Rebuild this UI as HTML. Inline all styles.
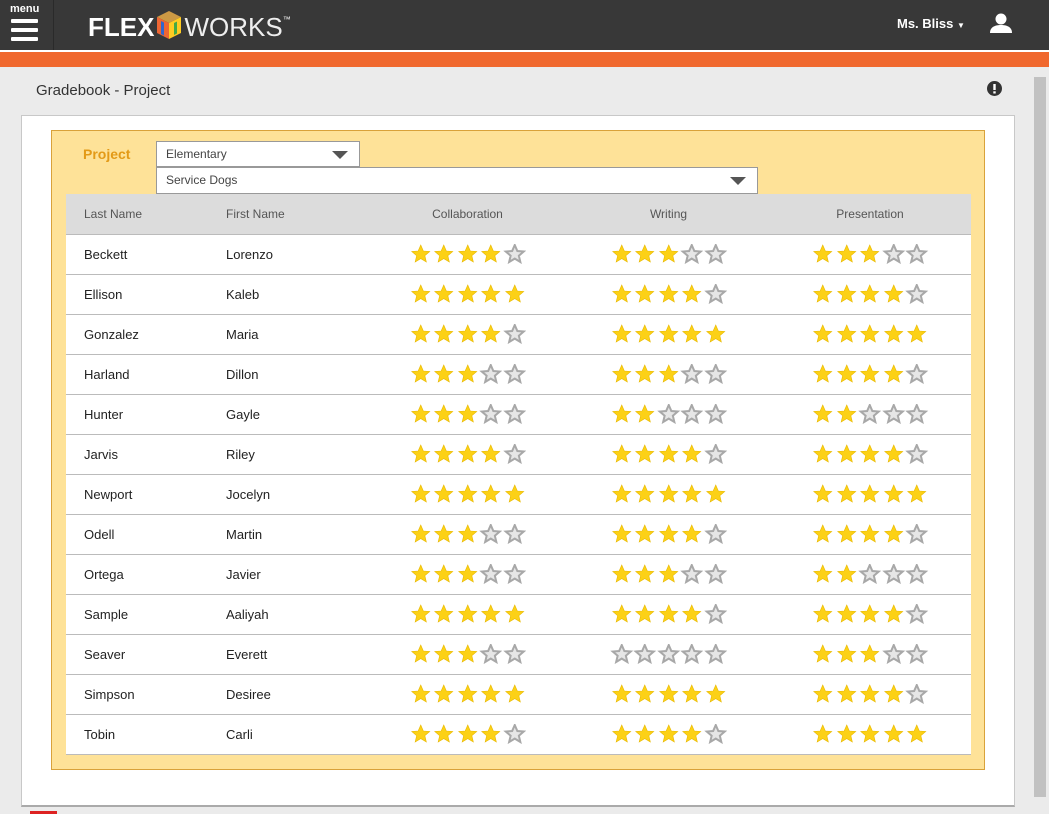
<!DOCTYPE html>
<html><head><meta charset="utf-8"><style>
*{box-sizing:border-box;margin:0;padding:0}
html,body{width:1049px;height:814px;overflow:hidden}
body{background:#ebebeb;font-family:"Liberation Sans",sans-serif;position:relative}
.hdr{position:absolute;left:0;top:0;width:1049px;height:50px;background:#383838}
.menu{position:absolute;left:0;top:0;width:54px;height:50px;border-right:1px solid #2a2a2a}
.menu .t{position:absolute;left:10px;top:3px;color:#fff;font-size:11px;font-weight:bold}
.menu i{position:absolute;left:11px;width:27px;height:4px;background:#fff;border-radius:1px}
.logo{position:absolute;left:88px;top:9px;color:#fff;font-size:26px}
.sep{position:absolute;top:50px;left:0;width:1049px;height:2px;background:#fff}
.or{position:absolute;top:52px;left:0;width:1049px;height:15px;background:#f0682e}
.title{position:absolute;left:36px;top:82px;font-size:15px;color:#333}
.panel{position:absolute;left:21px;top:115px;width:994px;height:692px;background:#fff;border:1px solid #c8c8c8;border-bottom:2px solid #aaa}
.yb{position:absolute;left:51px;top:130px;width:934px;height:640px;background:#fee298;border:1px solid #d9a23a}
.plab{position:absolute;left:83px;top:146px;font-size:14px;font-weight:bold;color:#e39a17}
.dd{position:absolute;background:#fff;border:1px solid #999;font-size:12px;color:#444;padding:5px 9px}
.dd b{position:absolute;right:11px;top:9px;border-left:8px solid transparent;border-right:8px solid transparent;border-top:8px solid #555}
table{position:absolute;left:66px;top:194px;width:905px;border-collapse:collapse;table-layout:fixed;background:#fff;font-size:13px;color:#222}
th{height:40px;background:#dcdcdc;font-weight:normal;color:#555;font-size:12px;text-align:left}
td{height:40px;border-top:1px solid #bbb}
tr:last-child td{border-bottom:1px solid #bbb}
.c1{padding-left:18px}
.s{text-align:center}
.s svg{display:inline-block;vertical-align:middle}
.sb{position:absolute;left:1031px;top:67px;width:18px;height:747px;background:#ebebeb}
.sb i{position:absolute;left:3px;top:10px;width:12px;height:720px;background:#c1c1c1}
</style></head><body>
<div class="hdr">
 <div class="menu"><span class="t">menu</span><i style="top:19px"></i><i style="top:28px"></i><i style="top:37px"></i></div>
 <div class="logo"><b style="font-weight:900">FLEX</b><svg width="28" height="32" viewBox="0 0 28 32" style="vertical-align:-5px;margin:0 1px"><path d="M2 8l12-6 12 6-12 6z" fill="#c94"/><path d="M2 8l12 6v16L2 24z" fill="#e63"/><path d="M26 8l-12 6v16l12-6z" fill="#fc2"/><path d="M6 12l3 1.5v13L6 25z" fill="#36c"/><path d="M19 14l3-1.5v12l-3 1.5z" fill="#4a4"/></svg><span style="color:#eee;font-weight:normal">WORKS</span><sup style="font-size:8px;vertical-align:14px">™</sup></div>
 <div style="position:absolute;left:897px;top:16px;color:#fff;font-size:13px;font-weight:bold">Ms. Bliss <span style="font-size:8px">▼</span></div>
 <svg style="position:absolute;left:990px;top:13px" width="22" height="22" viewBox="0 0 22 22"><circle cx="11" cy="6" r="5.5" fill="#fff"/><path d="M0 20c0-6 5-8 11-8s11 2 11 8z" fill="#fff"/></svg>
</div>
<div class="sep"></div><div class="or"></div>
<div class="title">Gradebook - Project</div>
<svg style="position:absolute;left:987px;top:81px" width="15" height="15"><circle cx="7.5" cy="7.5" r="7.5" fill="#333"/><rect x="6.3" y="3" width="2.4" height="6" fill="#fff"/><rect x="6.3" y="10.3" width="2.4" height="2.2" fill="#fff"/></svg>
<div class="panel"></div>
<div class="yb"></div>
<div class="plab">Project</div>
<div class="dd" style="left:156px;top:141px;width:204px;height:26px">Elementary<b></b></div>
<div class="dd" style="left:156px;top:167px;width:602px;height:27px">Service Dogs<b></b></div>
<table id="t">
<colgroup><col style="width:160px"><col style="width:141px"><col style="width:201px"><col style="width:201px"><col style="width:202px"></colgroup>
<tr><th class="c1">Last Name</th><th>First Name</th><th class="s">Collaboration</th><th class="s">Writing</th><th class="s">Presentation</th></tr>
<tr><td class="c1">Beckett</td><td>Lorenzo</td><td class="s" data-n="4"></td><td class="s" data-n="3"></td><td class="s" data-n="3"></td></tr>
<tr><td class="c1">Ellison</td><td>Kaleb</td><td class="s" data-n="5"></td><td class="s" data-n="4"></td><td class="s" data-n="4"></td></tr>
<tr><td class="c1">Gonzalez</td><td>Maria</td><td class="s" data-n="4"></td><td class="s" data-n="5"></td><td class="s" data-n="5"></td></tr>
<tr><td class="c1">Harland</td><td>Dillon</td><td class="s" data-n="3"></td><td class="s" data-n="3"></td><td class="s" data-n="4"></td></tr>
<tr><td class="c1">Hunter</td><td>Gayle</td><td class="s" data-n="3"></td><td class="s" data-n="2"></td><td class="s" data-n="2"></td></tr>
<tr><td class="c1">Jarvis</td><td>Riley</td><td class="s" data-n="4"></td><td class="s" data-n="4"></td><td class="s" data-n="4"></td></tr>
<tr><td class="c1">Newport</td><td>Jocelyn</td><td class="s" data-n="5"></td><td class="s" data-n="5"></td><td class="s" data-n="5"></td></tr>
<tr><td class="c1">Odell</td><td>Martin</td><td class="s" data-n="3"></td><td class="s" data-n="4"></td><td class="s" data-n="4"></td></tr>
<tr><td class="c1">Ortega</td><td>Javier</td><td class="s" data-n="3"></td><td class="s" data-n="3"></td><td class="s" data-n="2"></td></tr>
<tr><td class="c1">Sample</td><td>Aaliyah</td><td class="s" data-n="5"></td><td class="s" data-n="4"></td><td class="s" data-n="4"></td></tr>
<tr><td class="c1">Seaver</td><td>Everett</td><td class="s" data-n="3"></td><td class="s" data-n="0"></td><td class="s" data-n="3"></td></tr>
<tr><td class="c1">Simpson</td><td>Desiree</td><td class="s" data-n="5"></td><td class="s" data-n="5"></td><td class="s" data-n="4"></td></tr>
<tr><td class="c1">Tobin</td><td>Carli</td><td class="s" data-n="4"></td><td class="s" data-n="4"></td><td class="s" data-n="5"></td></tr>
</table>
<div class="sb"><i></i></div>
<div style="position:absolute;left:30px;top:811px;width:27px;height:3px;background:#d22"></div>
<script>
var P="M10 1l2.6 6 6.4.5-4.9 4.2 1.5 6.3L10 14.6 4.4 18l1.5-6.3L1 7.5l6.4-.5z";
document.querySelectorAll('td[data-n]').forEach(function(td){
 var n=+td.getAttribute('data-n'),h='';
 for(var i=0;i<5;i++){
  h+=i<n?'<svg width="23.5" height="20" viewBox="-1.75 0 23.5 20"><path d="'+P+'" fill="#fcd116" stroke="#e8b800" stroke-width=".6"/></svg>'
        :'<svg width="23.5" height="20" viewBox="-1.75 0 23.5 20"><path d="'+P+'" fill="#e6e6e6" stroke="#a8a8a8" stroke-width="2"/></svg>';
 }
 td.innerHTML=h;
});
</script>
</body></html>
